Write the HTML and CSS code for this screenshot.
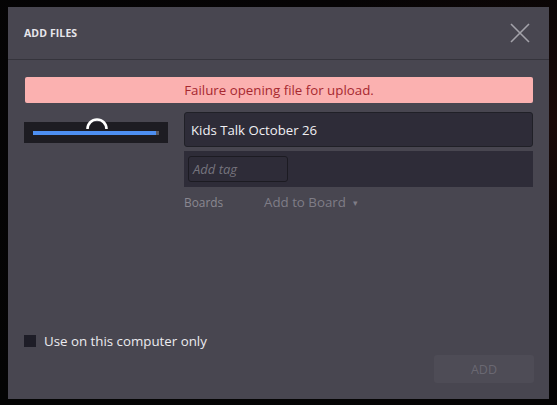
FILE: index.html
```html
<!DOCTYPE html>
<html>
<head>
<meta charset="utf-8">
<link rel="stylesheet" href="styles.css">
</head>
<body>
<div class="dialog">
  <div class="header">
    <span class="title">ADD FILES</span>
    <svg class="close" width="20" height="20" viewBox="0 0 20 20"><path d="M1 1 L19 19 M19 1 L1 19" stroke="#a3a2a9" stroke-width="1.6" fill="none"/></svg>
  </div>
  <div class="body">
    <div class="error">Failure opening file for upload.</div>
    <div class="file">
      <div class="thumb">
        <svg class="spinner" width="26" height="14" viewBox="0 0 26 14"><path d="M3.5 13 A9.5 9.5 0 0 1 22.5 13" stroke="#ffffff" stroke-width="2.6" fill="none"/></svg>
        <div class="track"><div class="bar" style="width:98%"></div></div>
      </div>
      <div class="fields">
        <div class="name">Kids Talk October 26</div>
        <div class="tags"><div class="tag-input">Add tag</div></div>
        <div class="boards"><span class="label">Boards</span><span class="add-board">Add to Board<span class="caret">▾</span></span></div>
      </div>
    </div>
  </div>
  <div class="footer">
    <label class="check"><span class="box"></span>Use on this computer only</label>
    <div class="actions"><button class="add">ADD</button></div>
  </div>
</div>
</body>
</html>
```
FILE: styles.css
```css
html, body {
  margin: 0;
  padding: 0;
  height: 100%;
}
body {
  background: radial-gradient(ellipse at 100% 30%, #1a0a08 0%, #060405 40%, #040404 100%);
  font-family: "Open Sans", "Noto Sans", sans-serif;
  padding: 7px 0 0 8px;
  box-sizing: border-box;
}
.dialog {
  width: 541px;
  height: 392px;
  background: #484650;
  display: flex;
  flex-direction: column;
  box-sizing: border-box;
}
.header {
  height: 52px;
  border-bottom: 1px solid #35343c;
  display: flex;
  align-items: center;
  justify-content: space-between;
  padding: 0 19px 0 16px;
  box-sizing: content-box;
}
.title {
  color: #e6e5ea;
  font-size: 10.5px;
  font-weight: 700;
  letter-spacing: 0.1px;
  margin-top: -1px;
}
.close {
  display: block;
  margin-top: -1px;
}
.body {
  flex: 1;
  padding: 17px 16px 0 17px;
}
.error {
  height: 26px;
  background: #fbb1b0;
  border-radius: 2px;
  color: #a7282f;
  font-size: 13.3px;
  display: flex;
  align-items: center;
  justify-content: center;
}
.file {
  display: flex;
  gap: 16px;
  margin-top: 9px;
  margin-left: -1px;
}
.thumb {
  position: relative;
  width: 144px;
  height: 21px;
  margin-top: 10px;
  background: #1d1c22;
  padding: 9px 9px 0 9px;
  box-sizing: border-box;
}
.spinner {
  position: absolute;
  left: 60px;
  top: -6px;
}
.track {
  height: 4px;
  background: #5b5a62;
}
.bar {
  height: 4px;
  background: #4d8ff2;
}
.fields {
  flex: 1;
  display: flex;
  flex-direction: column;
}
.name {
  height: 35px;
  background: #2e2c38;
  border: 1px solid #202027;
  border-radius: 3px;
  box-sizing: border-box;
  color: #f1f0f4;
  font-size: 13.2px;
  display: flex;
  align-items: center;
  padding-left: 6px;
}
.tags {
  margin-top: 4px;
  height: 36px;
  background: #2e2c38;
  padding: 5px 4px;
  box-sizing: border-box;
}
.tag-input {
  width: 100px;
  height: 26px;
  border: 1px solid #1c1b22;
  border-radius: 3px;
  box-sizing: border-box;
  color: #76747e;
  font-style: italic;
  font-size: 13px;
  display: flex;
  align-items: center;
  padding-left: 4px;
}
.boards {
  display: flex;
  align-items: center;
  height: 30px;
  font-size: 11.9px;
  color: #8a8891;
}
.label {
  width: 80px;
}
.add-board {
  color: #7f7d87;
  font-size: 13.3px;
}
.caret {
  font-size: 9px;
  vertical-align: 1px;
  margin-left: 7px;
}
.footer {
  padding: 0 15px 16px 16px;
}
.check {
  display: flex;
  align-items: center;
  color: #ecebef;
  font-size: 13.3px;
  margin-top: -1px;
}
.box {
  width: 12px;
  height: 12px;
  background: #1e1d27;
  margin-right: 8px;
}
.actions {
  display: flex;
  justify-content: flex-end;
  margin-top: 5px;
}
.add {
  width: 100px;
  height: 28px;
  border: none;
  border-radius: 3px;
  background: #4e4c56;
  color: #6a6872;
  font-family: "Open Sans", "Noto Sans", sans-serif;
  font-size: 12.5px;
}
```
